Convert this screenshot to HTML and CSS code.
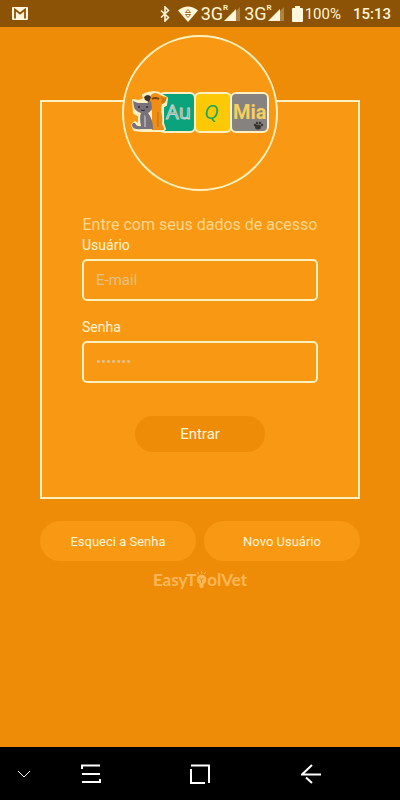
FILE: index.html
```html
<!DOCTYPE html>
<html lang="pt-BR">
  <head>
    <meta charset="UTF-8" />
    <meta name="viewport" content="width=device-width, initial-scale=1.0" />
    <title>Au Q Mia</title>
    <link rel="stylesheet" href="styles.css">
  </head>
  <body>
    <header class="status-bar">
      <svg class="mail" width="16" height="13" viewBox="0 0 16 13">
        <rect width="16" height="13" rx="1" fill="#fff6dc" />
        <path d="M3 11.5V2.5L8 6.5L13 2.5V11.5" fill="none" stroke="#8c5206" stroke-width="1.8" />
      </svg>
      <svg width="10" height="16" viewBox="0 0 10 16">
        <path d="M1 4.5L8.5 11.5L5 15V1L8.5 4.5L1 11.5" fill="none" stroke="#fff6dc" stroke-width="1.6" />
      </svg>
      <svg class="wifi" width="20" height="16" viewBox="0 0 20 16">
        <path d="M0 4.5Q10 -3.5 20 4.5L10 16Z" fill="#fff6dc" />
        <path d="M7.5 6.5L10 3.5L12.5 6.5ZM7.5 8.5L10 11.5L12.5 8.5Z" fill="none" stroke="#8c5206" stroke-width=".8" />
      </svg>
      <div class="network">
        <span>3G</span><sup>R</sup>
        <svg width="16" height="14" viewBox="0 0 16 14">
          <path d="M16 0V14H2Z" fill="#fff6dc" opacity=".3" />
          <path d="M12 2V14H0Z" fill="#fff6dc" />
        </svg>
      </div>
      <div class="network">
        <span>3G</span><sup>R</sup>
        <svg width="16" height="14" viewBox="0 0 16 14">
          <path d="M16 0V14H2Z" fill="#fff6dc" opacity=".3" />
          <path d="M12 2V14H0Z" fill="#fff6dc" />
        </svg>
      </div>
      <svg class="battery" width="11" height="16" viewBox="0 0 11 16">
        <path d="M3 0H8V2H10Q11 2 11 3V15Q11 16 10 16H1Q0 16 0 15V3Q0 2 1 2H3Z" fill="#fff6dc" />
      </svg>
      <span class="percent">100%</span>
      <time class="clock">15:13</time>
    </header>

    <main class="page">
      <form class="card">
        <div class="logo">
          <svg width="140" height="44" viewBox="0 0 140 44" role="img" aria-label="Au Q Mia">
            <!-- tiles -->
            <g stroke="#fff0c4" stroke-width="2">
              <rect x="29" y="2" width="36" height="39" rx="5" fill="#0ba37c" />
              <rect x="65" y="2" width="36" height="39" rx="5" fill="#fdc906" />
              <rect x="101" y="2" width="37" height="39" rx="5" fill="#85827f" />
            </g>
            <!-- light cutout behind the pets -->
            <path d="M3 9L9 10L14 8L13 4L18 2L24 1L29 2L34 5L37 7L36 14L33 16L33 32L35 38L33 40H19L12 40L4 39L2 34L5 31L9 34L9 25L4 22Z" fill="#fff0c4" stroke="#fff0c4" stroke-width="2" stroke-linejoin="round" />
            <!-- dog -->
            <path d="M21 4Q25 0 30 4Q35 6 37 6Q36 12 32 13L31 19Q33 29 32 33L34 37V39H22V20L18 16L18 10Z" fill="#f08d14" />
            <path d="M14 6Q18 2 21 6L19 11L15 9Z" fill="#383331" />
            <path d="M31 5Q34 9 36 6Q36 12 32 13Z" fill="#cf7411" />
            <path d="M22 8Q25 6 29 8" fill="none" stroke="#80420d" stroke-width="2" />
            <path d="M28 21V36" stroke="#bd6a10" stroke-width="1" />
            <!-- cat -->
            <path d="M3 10L8 12H17L21 10L22 16Q21 21 18 22Q23 28 23 38H11Q4 39 2 35Q2 31 5 32Q7 36 11 35Q9 26 11 22Q5 20 4 16Z" fill="#77717b" />
            <path d="M14 24Q16 24 16 28L16 36H14Z" fill="#aaa4aa" />
            <circle cx="9" cy="16" r="1" fill="#2f2a2d" />
            <circle cx="17" cy="16" r="1" fill="#2f2a2d" />
            <path d="M11 19Q13 20 15 19" fill="none" stroke="#2f2a2d" stroke-width="1" />
            <text class="logo-au" x="36" y="28">Au</text>
            <text class="logo-q" x="74" y="28">Q</text>
            <text class="logo-mia" x="103" y="28">Mia</text>
            <!-- paw -->
            <g fill="#38342f">
              <ellipse cx="128" cy="36" rx="3" ry="2.5" />
              <circle cx="125" cy="34" r="1.2" />
              <circle cx="127" cy="32" r="1.2" />
              <circle cx="130" cy="32" r="1.2" />
              <circle cx="132" cy="34" r="1.2" />
            </g>
          </svg>
        </div>

        <p class="intro">Entre com seus dados de acesso</p>
        <label for="email">Usuário</label>
        <input type="email" id="email" placeholder="E-mail">
        <label for="password">Senha</label>
        <input type="password" id="password" placeholder="•••••••">
        <button type="submit" class="enter">Entrar</button>
      </form>

      <div class="actions">
        <button type="button">Esqueci a Senha</button>
        <button type="button">Novo Usuário</button>
      </div>

      <div class="brand">
        <span>EasyT</span>
        <svg width="11" height="18" viewBox="0 0 11 18">
          <circle cx="5.5" cy="8.5" r="4.8" fill="currentColor" />
          <path d="M3.5 12H7.5V15.5L6.5 17H4.5L3.5 15.5Z" fill="currentColor" />
          <path d="M5.5 12V8.5M3.5 7L5.5 9L7.5 7" fill="none" stroke="#ee8c08" stroke-width="1" />
          <path d="M5.5 0V2.5M1.5 1L2.8 3M9.5 1L8.2 3" stroke="currentColor" stroke-width="1" />
        </svg>
        <span>olVet</span>
      </div>
    </main>

    <nav class="nav-bar">
      <button class="hide" aria-label="Ocultar">
        <svg width="14" height="8" viewBox="0 0 14 8"><path d="M1 1L7 7L13 1" /></svg>
      </button>
      <button aria-label="Recentes">
        <svg width="20" height="20" viewBox="0 0 20 20"><path d="M1 5V1.5H19M1 10H19M1 18H19V15" /></svg>
      </button>
      <button aria-label="Início">
        <svg width="20" height="20" viewBox="0 0 20 20"><path d="M1 1.5H19V19M1 5V19H15" /></svg>
      </button>
      <button aria-label="Voltar">
        <svg width="20" height="20" viewBox="0 0 20 20"><path d="M11 1L1 10.5H20M5 13.5L11 19" /></svg>
      </button>
    </nav>
  </body>
</html>
```

FILE: styles.css
```css
* {
  box-sizing: border-box;
  margin: 0;
  padding: 0;
}

body {
  display: flex;
  flex-direction: column;
  min-height: 100vh;
  background-color: #ee8c08;
  color: #fff6d6;
  font-family: Roboto, sans-serif;
}

button,
input {
  font-family: inherit;
  color: inherit;
}

button {
  border: none;
  cursor: pointer;
}

svg {
  display: block;
  flex-shrink: 0;
}

/* status bar */
.status-bar {
  display: flex;
  align-items: center;
  height: 27px;
  padding: 0 9px 0 12px;
  background-color: #8c5206;
}

.mail {
  margin-right: auto;
}

.wifi {
  margin: 0 3px 0 8px;
}

.network {
  display: flex;
  align-items: center;
  height: 20px;
  margin-right: 4px;
  font-size: 18px;
}

.network sup {
  align-self: flex-start;
  font-size: 8px;
  font-weight: 600;
  line-height: 8px;
}

.network svg {
  margin-left: -4px;
}

.battery {
  margin: 0 2px 0 4px;
}

.percent {
  font-size: 15px;
}

.clock {
  margin-left: 12px;
  font-size: 15px;
  font-weight: 500;
}

/* login */
.page {
  flex: 1;
  padding: 73px 40px 20px;
}

.card {
  display: flex;
  flex-direction: column;
  padding: 0 40px 45px;
  border: 2px solid #fff1bf;
  background-color: #f99812;
}

.logo {
  display: flex;
  justify-content: center;
  align-items: center;
  align-self: center;
  width: 156px;
  height: 156px;
  margin-top: -67px;
  border: 2px solid #fff1bf;
  border-radius: 50%;
  background-color: #f99812;
}

.logo-au {
  font: 20px "Open Sans", sans-serif;
  fill: #4c9f8b;
  stroke: #c5d3c9;
  stroke-width: 1px;
}

.logo-q {
  font: italic 20px "Open Sans", sans-serif;
  fill: #17a95b;
}

.logo-mia {
  font: bold 20px Roboto, sans-serif;
  fill: #f6cf60;
}

.intro {
  margin-top: 24px;
  color: #ffd68c;
  font-size: 16px;
  line-height: 20px;
  text-align: center;
}

.card label {
  font-size: 14px;
  line-height: 20px;
}

.card input {
  width: 100%;
  height: 42px;
  margin: 4px 0 16px;
  padding: 0 12px;
  border: 2px solid #fff1bf;
  border-radius: 5px;
  background: none;
  font-size: 15px;
}

.card input::placeholder {
  color: #e6c08c;
}

.enter {
  align-self: center;
  width: 130px;
  height: 36px;
  margin-top: 17px;
  border-radius: 18px;
  background-color: #ee8c08;
  font-size: 15px;
}

.actions {
  display: flex;
  gap: 8px;
  margin-top: 22px;
}

.actions button {
  flex: 1;
  height: 40px;
  border-radius: 20px;
  background-color: #f99812;
  font-size: 13px;
}

.brand {
  display: flex;
  justify-content: center;
  align-items: center;
  margin-top: 9px;
  color: #ffb757;
  font-family: Lato, sans-serif;
  font-size: 17px;
  font-weight: 700;
  line-height: 20px;
}

/* system buttons */
.nav-bar {
  display: grid;
  grid-template-columns: 48fr 86fr 132fr 90fr 44fr;
  align-items: center;
  height: 53px;
  background-color: #000;
}

.nav-bar button {
  display: flex;
  justify-content: center;
  padding: 12px 0;
  background: none;
}

.nav-bar path {
  fill: none;
  stroke: #fff;
  stroke-width: 2;
}

.nav-bar .hide path {
  stroke-width: 1;
}
```
